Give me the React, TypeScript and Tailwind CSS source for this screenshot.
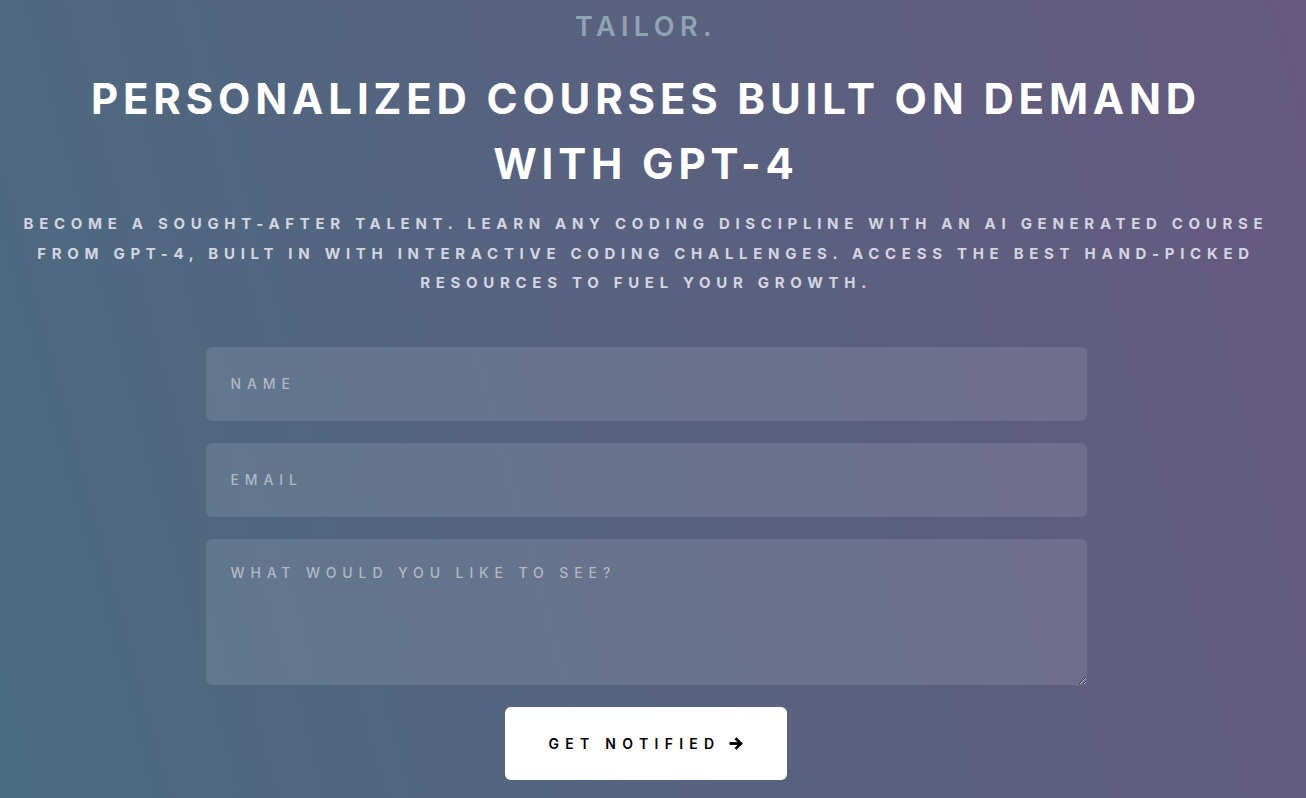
import React from "react";

const FONT = { fontFamily: "Inter, 'Liberation Sans', sans-serif" };

function ArrowIcon() {
  return (
    <svg width="15" height="15" viewBox="0 0 24 24" fill="none" stroke="currentColor" strokeWidth="4.5" strokeLinecap="square">
      <path d="M3 12h15" />
      <path d="M12 5l7 7-7 7" />
    </svg>
  );
}

export default function App() {
  return (
    <div
      style={FONT}
      className="min-h-[798px] w-full bg-[linear-gradient(75deg,#4a6b80_0%,#58627f_50%,#665a7e_100%)] flex flex-col items-center pl-[16px] pr-[30px]"
    >
      <div className="text-[27px] font-semibold tracking-[0.2em] text-[#8fa3b5] pt-[8px] leading-[38px]">
        TAILOR.
      </div>
      <h1 className="mt-[20px] text-center text-[42px] leading-[65px] font-bold tracking-[0.115em] text-white max-w-[1150px]">
        PERSONALIZED COURSES BUILT ON DEMAND WITH GPT-4
      </h1>
      <p className="mt-[13px] text-center text-[15px] leading-[29.5px] font-bold tracking-[0.38em] text-[#d3d6e2]">
        BECOME A SOUGHT-AFTER TALENT. LEARN ANY CODING DISCIPLINE WITH AN AI GENERATED COURSE FROM GPT-4, BUILT IN WITH
        INTERACTIVE CODING CHALLENGES. ACCESS THE BEST HAND-PICKED RESOURCES TO FUEL YOUR GROWTH.
      </p>
      <form className="mt-[49px] w-[881px] flex flex-col gap-[22px]" onSubmit={(e) => e.preventDefault()}>
        <input
          placeholder="NAME"
          className="h-[74px] w-full rounded-md bg-white/10 px-[25px] text-[14px] font-medium tracking-[0.42em] text-white placeholder:text-[#b0b8c8] outline-none"
        />
        <input
          placeholder="EMAIL"
          className="h-[74px] w-full rounded-md bg-white/10 px-[25px] text-[14px] font-medium tracking-[0.42em] text-white placeholder:text-[#b0b8c8] outline-none"
        />
        <textarea
          placeholder="WHAT WOULD YOU LIKE TO SEE?"
          className="h-[146px] w-full rounded-md bg-white/10 px-[25px] pt-[23px] text-[14px] font-medium tracking-[0.42em] text-white placeholder:text-[#b0b8c8] outline-none"
        />
        <div className="flex justify-center">
          <button
            type="submit"
            className="h-[73px] w-[282px] rounded-md bg-white text-black flex items-center justify-center gap-[8px] text-[14px] font-semibold tracking-[0.45em]"
          >
            GET NOTIFIED <ArrowIcon />
          </button>
        </div>
      </form>
    </div>
  );
}
